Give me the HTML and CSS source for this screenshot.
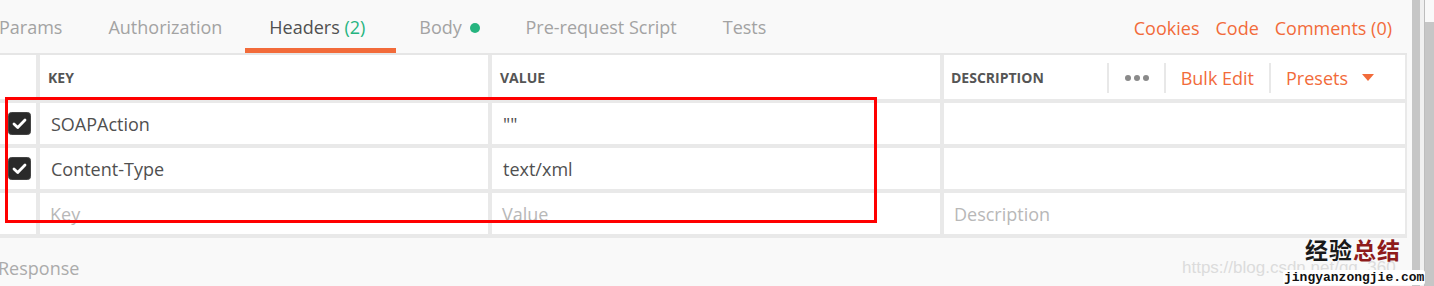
FILE: index.html
```html
<!DOCTYPE html>
<html lang="en">
<head>
    <meta charset="UTF-8">
    <title>Headers</title>
    <link rel="stylesheet" href="styles.css">
</head>
<body>
    <div class="page">
        <div class="main">
            <div class="tabbar">
                <div class="tabs">
                    <div class="tab first">Params</div>
                    <div class="tab">Authorization</div>
                    <div class="tab active">Headers <span class="count">(2)</span></div>
                    <div class="tab">Body <span class="dot"></span></div>
                    <div class="tab">Pre-request Script</div>
                    <div class="tab">Tests</div>
                </div>
                <div class="links">
                    <a>Cookies</a>
                    <a>Code</a>
                    <a>Comments (0)</a>
                </div>
            </div>

            <div class="table">
                <div class="cell"></div>
                <div class="cell head">KEY</div>
                <div class="cell head">VALUE</div>
                <div class="cell head desc-head">
                    <span>DESCRIPTION</span>
                    <div class="tools">
                        <div class="tool"><span class="dots"><i></i><i></i><i></i></span></div>
                        <div class="tool link">Bulk Edit</div>
                        <div class="tool link last">Presets <span class="caret"></span></div>
                    </div>
                </div>

                <div class="cell check">
                    <svg width="23" height="23" viewBox="0 0 23 23"><rect x="0.5" y="0.5" width="22" height="22" rx="3" fill="#2a2a2a" stroke="#444"/><polyline points="6,12 9.7,15.5 17,8" fill="none" stroke="#fff" stroke-width="2.8" stroke-linecap="round" stroke-linejoin="round"/></svg>
                </div>
                <div class="cell text">SOAPAction</div>
                <div class="cell text">""</div>
                <div class="cell text"></div>

                <div class="cell check">
                    <svg width="23" height="23" viewBox="0 0 23 23"><rect x="0.5" y="0.5" width="22" height="22" rx="3" fill="#2a2a2a" stroke="#444"/><polyline points="6,12 9.7,15.5 17,8" fill="none" stroke="#fff" stroke-width="2.8" stroke-linecap="round" stroke-linejoin="round"/></svg>
                </div>
                <div class="cell text">Content-Type</div>
                <div class="cell text">text/xml</div>
                <div class="cell text"></div>

                <div class="cell"></div>
                <div class="cell text placeholder">Key</div>
                <div class="cell text placeholder">Value</div>
                <div class="cell text placeholder">Description</div>
            </div>

            <div class="response">Response</div>
        </div>

        <div class="scrollbars">
            <div class="bar"></div>
            <div class="track"></div>
            <div class="thumb"></div>
        </div>
    </div>

    <!-- annotation and watermark on top of the page -->
    <div class="highlight"></div>
    <div class="csdn">https://blog.csdn.net/qq_360</div>
    <div class="stamp">
        <div class="stamp-title">经验<span class="red">总结</span></div>
        <div class="stamp-url">jingyanzongjie.com</div>
    </div>
</body>
</html>
```

FILE: styles.css
```css
/* Base */
body {
    margin: 0;
    height: 286px;
    overflow: hidden;
    background-color: #f9f9f9;
    font-family: "Open Sans", "Liberation Sans", sans-serif;
    font-size: 18px;
    color: #505050;
}

.page {
    display: flex;
    height: 286px;
}

.main {
    width: 1412px;
    overflow: hidden;
}

/* Tab bar */
.tabbar {
    display: flex;
    justify-content: space-between;
    width: 1407px;
    height: 53px;
    border-bottom: 2px solid #e6e6e6;
}

.tabs {
    display: flex;
    margin-left: -24px;
}

.tab {
    box-sizing: border-box;
    height: 53px;
    padding: 15px 23px 0;
    line-height: 24px;
    color: #a3a3a3;
    border-bottom: 5px solid transparent;
    white-space: nowrap;
}

.tab.active {
    padding-left: 24px;
    padding-right: 31px;
    color: #505050;
    border-bottom-color: #f26b3a;
}

.count {
    color: #26b47f;
}

.dot {
    display: inline-block;
    width: 10px;
    height: 10px;
    margin-left: 3px;
    border-radius: 50%;
    background-color: #26b47f;
    vertical-align: 1px;
}

.links {
    display: flex;
    gap: 16px;
    padding: 16px 15px 0 0;
    line-height: 24px;
}

.links a {
    color: #f26b3a;
}

/* Headers table */
.table {
    display: grid;
    grid-template-columns: 36px 448px 448px 461px;
    grid-template-rows: 44px 41px 41px 41px;
    gap: 4px;
    width: 1405px;
    padding: 0 2px 4px 0;
    background-color: #e9e9e9;
}

.cell {
    display: flex;
    align-items: center;
    background-color: #fff;
}

.head {
    padding-left: 8px;
    font-size: 14px;
    font-weight: bold;
    color: #555;
    padding-top: 1px;
}

.desc-head {
    padding-left: 7px;
}

.tools {
    display: flex;
    align-items: center;
    margin-left: auto;
    font-size: 18px;
    font-weight: normal;
}

.tool {
    display: flex;
    align-items: center;
    height: 30px;
    padding: 0 15px;
    border-left: 2px solid #e8e8e8;
}

.tool.link {
    color: #f26b3a;
}

.tool.last {
    padding-right: 31px;
}

.dots {
    display: flex;
    gap: 3px;
    margin-left: 1px;
}

.dots i {
    width: 6px;
    height: 6px;
    border-radius: 50%;
    background-color: #8a8a8a;
}

.caret {
    width: 0;
    height: 0;
    margin-left: 14px;
    border-left: 6px solid transparent;
    border-right: 6px solid transparent;
    border-top: 7px solid #f26b3a;
}

.check {
    padding-left: 8px;
}

.text {
    padding-left: 11px;
    line-height: 24px;
}

.placeholder {
    padding-left: 10px;
    color: #b8b8b8;
}

.response {
    margin: 18px 0 0 -2px;
    line-height: 24px;
    color: #ababab;
}

/* Scrollbars at the right edge */
.scrollbars {
    display: flex;
    width: 22px;
}

.bar {
    width: 8px;
    background-color: #c6c6c6;
}

.track {
    width: 4px;
    background-color: #f0f0f0;
    border-right: 1px solid #bdbdbd;
}

.thumb {
    width: 9px;
    margin-top: 22px;
    background-color: #c6c6c6;
}

/* Red annotation box */
.highlight {
    position: absolute;
    left: 5px;
    top: 97px;
    width: 872px;
    height: 126px;
    box-sizing: border-box;
    border: 3px solid #ff0000;
}

/* Watermarks */
.csdn {
    position: absolute;
    left: 1182px;
    top: 256px;
    font-family: "Liberation Sans", sans-serif;
    font-size: 17px;
    line-height: 24px;
    color: #dcdcdc;
    white-space: nowrap;
}

.stamp {
    position: absolute;
    left: 1283px;
    top: 236px;
    width: 140px;
}

.stamp-title {
    padding-left: 22px;
    font-family: "Noto Sans CJK SC", sans-serif;
    font-size: 23px;
    font-weight: bold;
    line-height: 26px;
    letter-spacing: 1px;
    color: #1a1a1a;
}

.red {
    color: #8e1b1b;
}

.stamp-url {
    display: inline-block;
    padding: 0 1px;
    font-family: "Liberation Mono", monospace;
    font-size: 13px;
    font-weight: bold;
    line-height: 15px;
    color: #111;
    background-color: #fff;
    border-radius: 3px;
}
```
